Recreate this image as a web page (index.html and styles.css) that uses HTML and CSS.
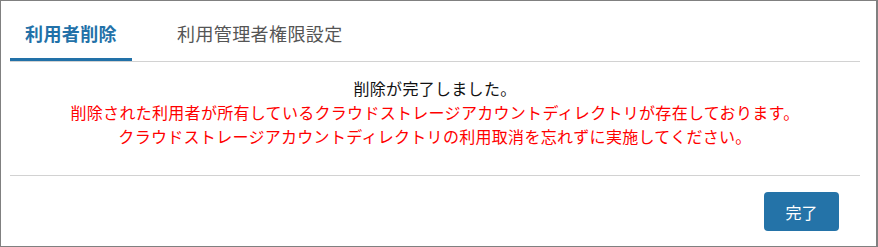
FILE: index.html
```html
<!DOCTYPE html>
<html lang="ja">
<head>
<meta charset="utf-8">
<link rel="stylesheet" href="styles.css">
</head>
<body>
<div class="window">
  <div class="panel">
    <div class="tabs">
      <div class="tab active">利用者削除</div>
      <div class="tab">利用管理者権限設定</div>
    </div>
    <div class="message">
      <p class="done">削除が完了しました。</p>
      <p class="warn">削除された利用者が所有しているクラウドストレージアカウントディレクトリが存在しております。</p>
      <p class="warn">クラウドストレージアカウントディレクトリの利用取消を忘れずに実施してください。</p>
    </div>
    <div class="footer">
      <button class="btn">完了</button>
    </div>
  </div>
</div>
</body>
</html>
```
FILE: styles.css
```css
html, body {
  margin: 0;
  padding: 0;
  background: #fff;
}
body {
  font-family: "Noto Sans CJK JP", "Noto Sans", sans-serif;
}
.window {
  box-sizing: border-box;
  width: 878px;
  height: 247px;
  border: 1px solid #808080;
  border-right-width: 2px;
  padding: 0 16px 0 9px;
}
.tabs {
  display: flex;
  border-bottom: 1px solid #d2d2d2;
  height: 60px;
}
.tab {
  box-sizing: border-box;
  padding: 18px 15px 0 15px;
  font-size: 18px;
  line-height: 28px;
  letter-spacing: 0.4px;
  color: #555;
  margin-right: 30px;
}
.tab.active {
  width: 122px;
  padding-left: 15px;
  padding-right: 0;
  margin-right: 30px;
  color: #2271a8;
  font-weight: bold;
  border-bottom: 3px solid #2271a8;
}
.message {
  padding: 14px 0 27px;
  border-bottom: 1px solid #d2d2d2;
  text-align: center;
}
.message p {
  margin: 0;
  font-size: 16px;
  line-height: 24px;
  letter-spacing: 0.3px;
}
.done { color: #111; }
.warn { color: #ff0000; }
.footer {
  display: flex;
  justify-content: flex-end;
  padding: 16px 21px 0 0;
}
.btn {
  width: 75px;
  height: 39px;
  border: none;
  border-radius: 4px;
  background: #2473a8;
  color: #fff;
  font-family: "Noto Sans CJK JP", sans-serif;
  font-size: 16px;
  padding: 0;
}
```
